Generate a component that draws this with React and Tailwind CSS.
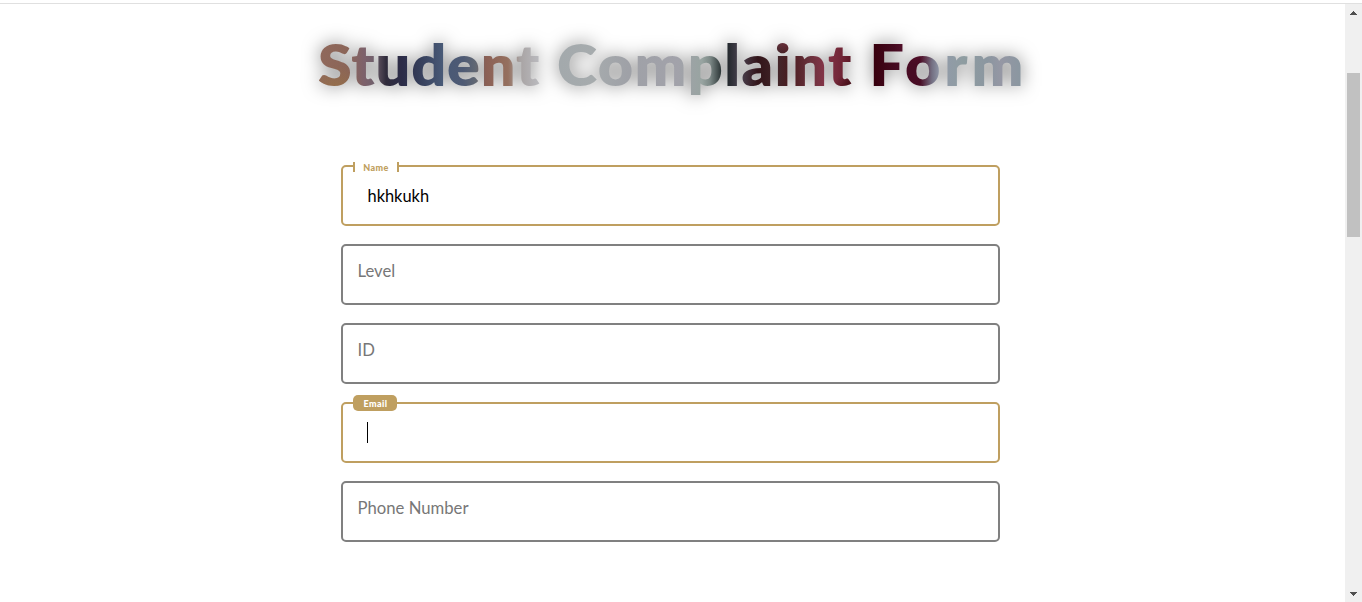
import React from 'react';

// The heading is stretched horizontally, so gradient positions are divided by the same factor.
const STRETCH = 1.07;
const px = (n) => `${(n / STRETCH).toFixed(2)}px`;

const glows = [
  [466, 7, '#904054cc', '#90405400', 22],
  [18, 65, '#9a7440aa', '#9a744000', 26],
  [538, 69, '#200000cc', '#20000000', 24],
  [600, 15, '#7018389a', '#70183800', 24],
];

const stops = [
  ['#90695c', 0], ['#8b6558', 30], ['#7d616b', 46], ['#70606c', 56], ['#302c3c', 68],
  ['#2c2c48', 84], ['#343c58', 100], ['#485976', 124], ['#4e5a74', 145], ['#626873', 158],
  ['#8b6055', 168], ['#95705f', 190], ['#a8a3a3', 202], ['#b9b9bd', 220], ['#a3a9ac', 242],
  ['#a6abad', 275], ['#9fa1a7', 310], ['#a2a2aa', 360], ['#98a4a1', 384], ['#7d8987', 392],
  ['#172022', 406], ['#4b4351', 422], ['#321419', 440], ['#42262a', 460], ['#4a1a1e', 472],
  ['#66303a', 490], ['#833447', 506], ['#702536', 524], ['#551220', 536], ['#38000e', 556],
  ['#480c24', 582], ['#480c24', 602], ['#747083', 614], ['#929aaa', 622], ['#8f9da1', 645],
  ['#8b96a0', 670], ['#9597a4', 683], ['#8997a0', 705],
];

const titleFill = {
  backgroundImage: [
    ...glows.map(([x, y, from, to, r]) => `radial-gradient(circle at ${px(x)} ${y}px, ${from} 0px, ${to} ${r}px)`),
    `linear-gradient(90deg, ${stops.map(([c, x]) => `${c} ${px(x)}`).join(', ')})`,
  ].join(', '),
};

function Field({ label, value, state = 'idle' }) {
  const active = state !== 'idle';
  return (
    <div
      className={
        active
          ? 'relative h-[61px] rounded-[5px] border-2 border-[#bf9f60]'
          : 'relative h-[61px] rounded-[5px] border-2 border-[#808080] pt-[13px] pl-[14.5px] text-[16.7px] leading-6 text-[#777]'
      }
    >
      {state === 'idle' && <span>{label}</span>}
      {state === 'filled' && (
        <>
          <span className="absolute -top-[5px] left-[10px] flex h-[10px] w-[46px] items-center justify-center border-x-2 border-[#bf9f60] bg-white text-[9px] leading-none font-black tracking-[0.4px] text-[#bf9f60]">
            {label}
          </span>
          <div className="pt-[17px] pl-[24.5px] text-[16.4px] leading-6 text-black">{value}</div>
        </>
      )}
      {state === 'focused' && (
        <>
          <span className="absolute -top-[9px] left-[10px] flex h-4 w-11 items-center justify-center rounded-[5px] bg-[#bf9f60] pl-[1px] text-[9px] leading-none font-black tracking-[0.4px] text-white">
            {label}
          </span>
          <div className="mt-[18px] ml-[24px] h-[21px] w-px bg-black" />
        </>
      )}
    </div>
  );
}

function Scrollbar() {
  return (
    <div className="flex w-[17px] shrink-0 flex-col items-center justify-between bg-[#f0f0f0]">
      <div className="flex flex-col items-center">
        <svg className="mt-[7px] h-[4px] w-[7px]" viewBox="0 0 7 4" shapeRendering="crispEdges">
          <path d="M3 0h1v1h1v1h1v1h1v1H0V3h1V2h1V1h1z" fill="#505050" />
        </svg>
        <div className="mt-[58px] h-[164px] w-[13px] bg-[#c1c1c1]" />
      </div>
      <svg className="mb-[6px] h-[4px] w-[7px]" viewBox="0 0 7 4" shapeRendering="crispEdges">
        <path d="M0 0h7v1H6v1H5v1H4v1H3V3H2V2H1V1H0z" fill="#505050" />
      </svg>
    </div>
  );
}

export default function App() {
  return (
    <div className="flex h-[602px] w-[1362px] flex-col overflow-hidden bg-white font-['Lato','Liberation_Sans',sans-serif]">
      <div className="h-1 shrink-0 border-b border-[#e0e0e0]" />
      <div className="flex min-h-0 flex-1">
        <main className="flex-1 pt-[22px]">
          <div className="ml-[318px] w-[710px] drop-shadow-[0_0_9px_rgba(0,0,0,0.5)]">
            <h1
              style={titleFill}
              className="flex h-[76px] w-[664px] origin-left scale-x-[1.07] bg-clip-text text-[57px] leading-[76px] font-extrabold whitespace-nowrap text-transparent"
            >
              <span className="w-[223.4px] tracking-[0.8px]">Student</span>
              <span className="w-[292px] tracking-[1.3px]">Complaint</span>
              <span className="w-[148.6px] tracking-[3.6px]">Form</span>
            </h1>
          </div>
          <form className="mt-[63px] ml-[341px] flex w-[659px] flex-col gap-[18px]">
            <Field label="Name" value="hkhkukh" state="filled" />
            <Field label="Level" />
            <Field label="ID" />
            <Field label="Email" state="focused" />
            <Field label="Phone Number" />
          </form>
        </main>
        <Scrollbar />
      </div>
    </div>
  );
}
